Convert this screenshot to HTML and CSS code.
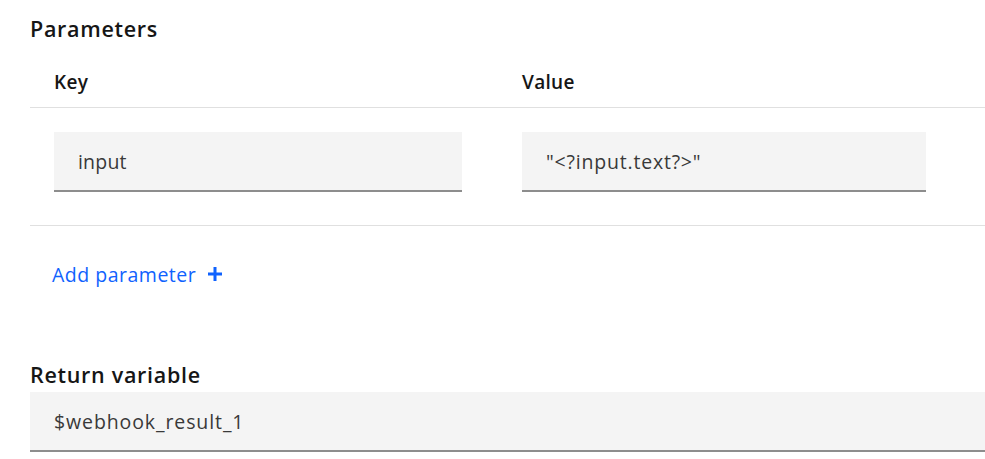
FILE: index.html
```html
<!DOCTYPE html>
<html>
<head>
<meta charset="utf-8">
<link rel="stylesheet" href="styles.css">
</head>
<body>
<div class="page">
  <h2 class="section-title">Parameters</h2>
  <div class="table">
    <div class="row head">
      <div class="cell key">Key</div>
      <div class="cell">Value</div>
    </div>
    <div class="row body">
      <div class="cell key"><div class="field field-key">input</div></div>
      <div class="cell"><div class="field field-value">"&lt;?input.text?&gt;"</div></div>
    </div>
  </div>
  <div class="add">
    <span class="add-link">Add parameter</span>
    <svg class="plus" width="14" height="14" viewBox="0 0 14 14"><path d="M5.5 0h3v5.5H14v3H8.5V14h-3V8.5H0v-3h5.5z" fill="#0f62fe"/></svg>
  </div>
  <h2 class="section-title return-title">Return variable</h2>
  <div class="field field-return">$webhook_result_1</div>
</div>
</body>
</html>
```
FILE: styles.css
```css
* { box-sizing: border-box; }
html, body { margin: 0; padding: 0; background: #ffffff; }
body {
  font-family: "Open Sans", "Noto Sans", sans-serif;
  color: #161616;
}
.page {
  padding: 16px 0 0 30px;
}
.section-title {
  margin: 0;
  font-size: 21.5px;
  line-height: 26px;
  font-weight: 600;
  letter-spacing: 0.7px;
  color: #161616;
}
.table {
  margin-top: 16px;
}
.row {
  display: grid;
  grid-template-columns: 468px 1fr;
  border-bottom: 1px solid #e0e0e0;
}
.row.head {
  height: 50px;
  align-items: center;
  font-size: 19px;
  font-weight: 600;
  letter-spacing: 0.3px;
  padding-bottom: 2px;
}
.row.body {
  height: 118px;
  padding-top: 24px;
  align-items: start;
}
.cell {
  padding-left: 24px;
}
.field {
  height: 60px;
  background: #f4f4f4;
  border-bottom: 2px solid #8d8d8d;
  display: flex;
  align-items: center;
  padding-left: 24px;
  font-size: 19.5px;
  letter-spacing: 0.2px;
  color: #393939;
}
.field-key { width: 408px; }
.field-value { width: 404px; letter-spacing: 0.8px; }
.field-return { letter-spacing: 0.9px; }
.add {
  display: flex;
  align-items: center;
  gap: 12px;
  height: 34px;
  margin-top: 31px;
  padding-left: 22px;
}
.add-link {
  color: #0f62fe;
  font-size: 19.5px;
  letter-spacing: 0.5px;
}
.plus { display: block; }
.return-title {
  margin-top: 71px;
}
.field-return {
  margin-top: 4px;
  width: 955px;
}
```
